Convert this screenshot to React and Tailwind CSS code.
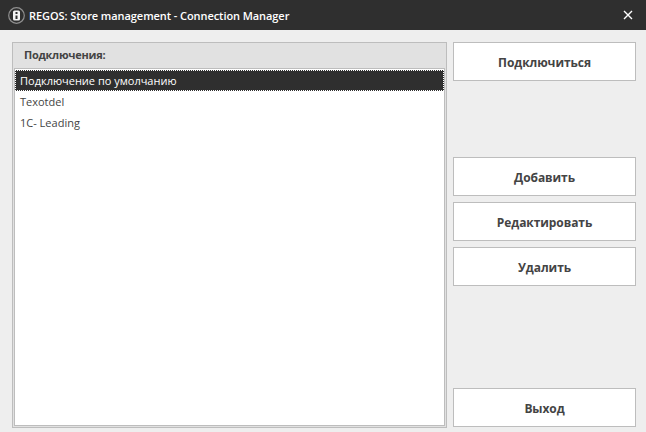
import React from 'react';

const font = { fontFamily: '"Open Sans", "Noto Sans", sans-serif' };

function Btn({ children }) {
  return (
    <button className="w-full h-[39px] shrink-0 bg-white border border-[#bdbdbd] pt-[2px] text-[12px] tracking-[-0.08px] font-bold text-[#444444] flex items-center justify-center">
      {children}
    </button>
  );
}

export default function App() {
  return (
    <div style={font} className="w-[646px] h-[432px] bg-[#eeeeee] flex flex-col overflow-hidden">
      {/* title bar */}
      <div className="h-[30px] shrink-0 bg-[#2f2f2f] flex items-center pl-[8px] pr-[12px]">
        <svg width="17" height="17" viewBox="0 0 17 17" className="shrink-0">
          <circle cx="8.5" cy="8.5" r="7.8" fill="none" stroke="#8f8f8f" strokeWidth="1.2" />
          <rect x="5" y="3.5" width="7" height="10" rx="1.5" fill="#f4f4f4" />
          <rect x="7.5" y="5" width="2" height="2" fill="#2f2f2f" />
          <rect x="7.5" y="8.5" width="2" height="3.5" fill="#2f2f2f" />
        </svg>
        <span className="ml-[4px] text-[11px] tracking-[-0.07px] font-semibold text-white leading-none whitespace-nowrap">
          REGOS: Store management - Connection Manager
        </span>
        <svg width="10" height="10" viewBox="0 0 10 10" className="ml-auto mr-[1px]">
          <path d="M1 1 L9 9 M9 1 L1 9" stroke="#ffffff" strokeWidth="1.4" />
        </svg>
      </div>

      <div className="flex-1 flex pt-[12px] pl-[12px] pr-[10px] pb-[4px] gap-[6px] min-h-0">
        {/* connections panel */}
        <div className="w-[435px] flex flex-col border border-[#bdbdbd] bg-[#e1e1e1]">
          <div className="h-[25px] shrink-0 flex items-center pl-[11px] text-[11px] tracking-[-0.25px] font-bold text-[#444444]">
            Подключения:
          </div>
          <div className="flex-1 mx-[1px] mb-[1px] border border-[#bdbdbd] bg-white text-[11px] text-[#444444] pt-[1px]">
            <div className="h-[21px] flex items-center pl-[4px] pt-[1px] bg-[#2f2f2f] text-white border border-dotted border-white">
              Подключение по умолчанию
            </div>
            <div className="h-[21px] flex items-center pl-[5px] pt-[1px]">Texotdel</div>
            <div className="h-[21px] flex items-center pl-[5px] pt-[1px]">1C- Leading</div>
          </div>
        </div>

        {/* actions */}
        <div className="w-[183px] flex flex-col">
          <Btn>Подключиться</Btn>
          <div className="h-[76px] shrink-0" />
          <div className="flex flex-col gap-[6px]">
            <Btn>Добавить</Btn>
            <Btn>Редактировать</Btn>
            <Btn>Удалить</Btn>
          </div>
          <div className="mt-auto mb-[1px]">
            <Btn>Выход</Btn>
          </div>
        </div>
      </div>
    </div>
  );
}
